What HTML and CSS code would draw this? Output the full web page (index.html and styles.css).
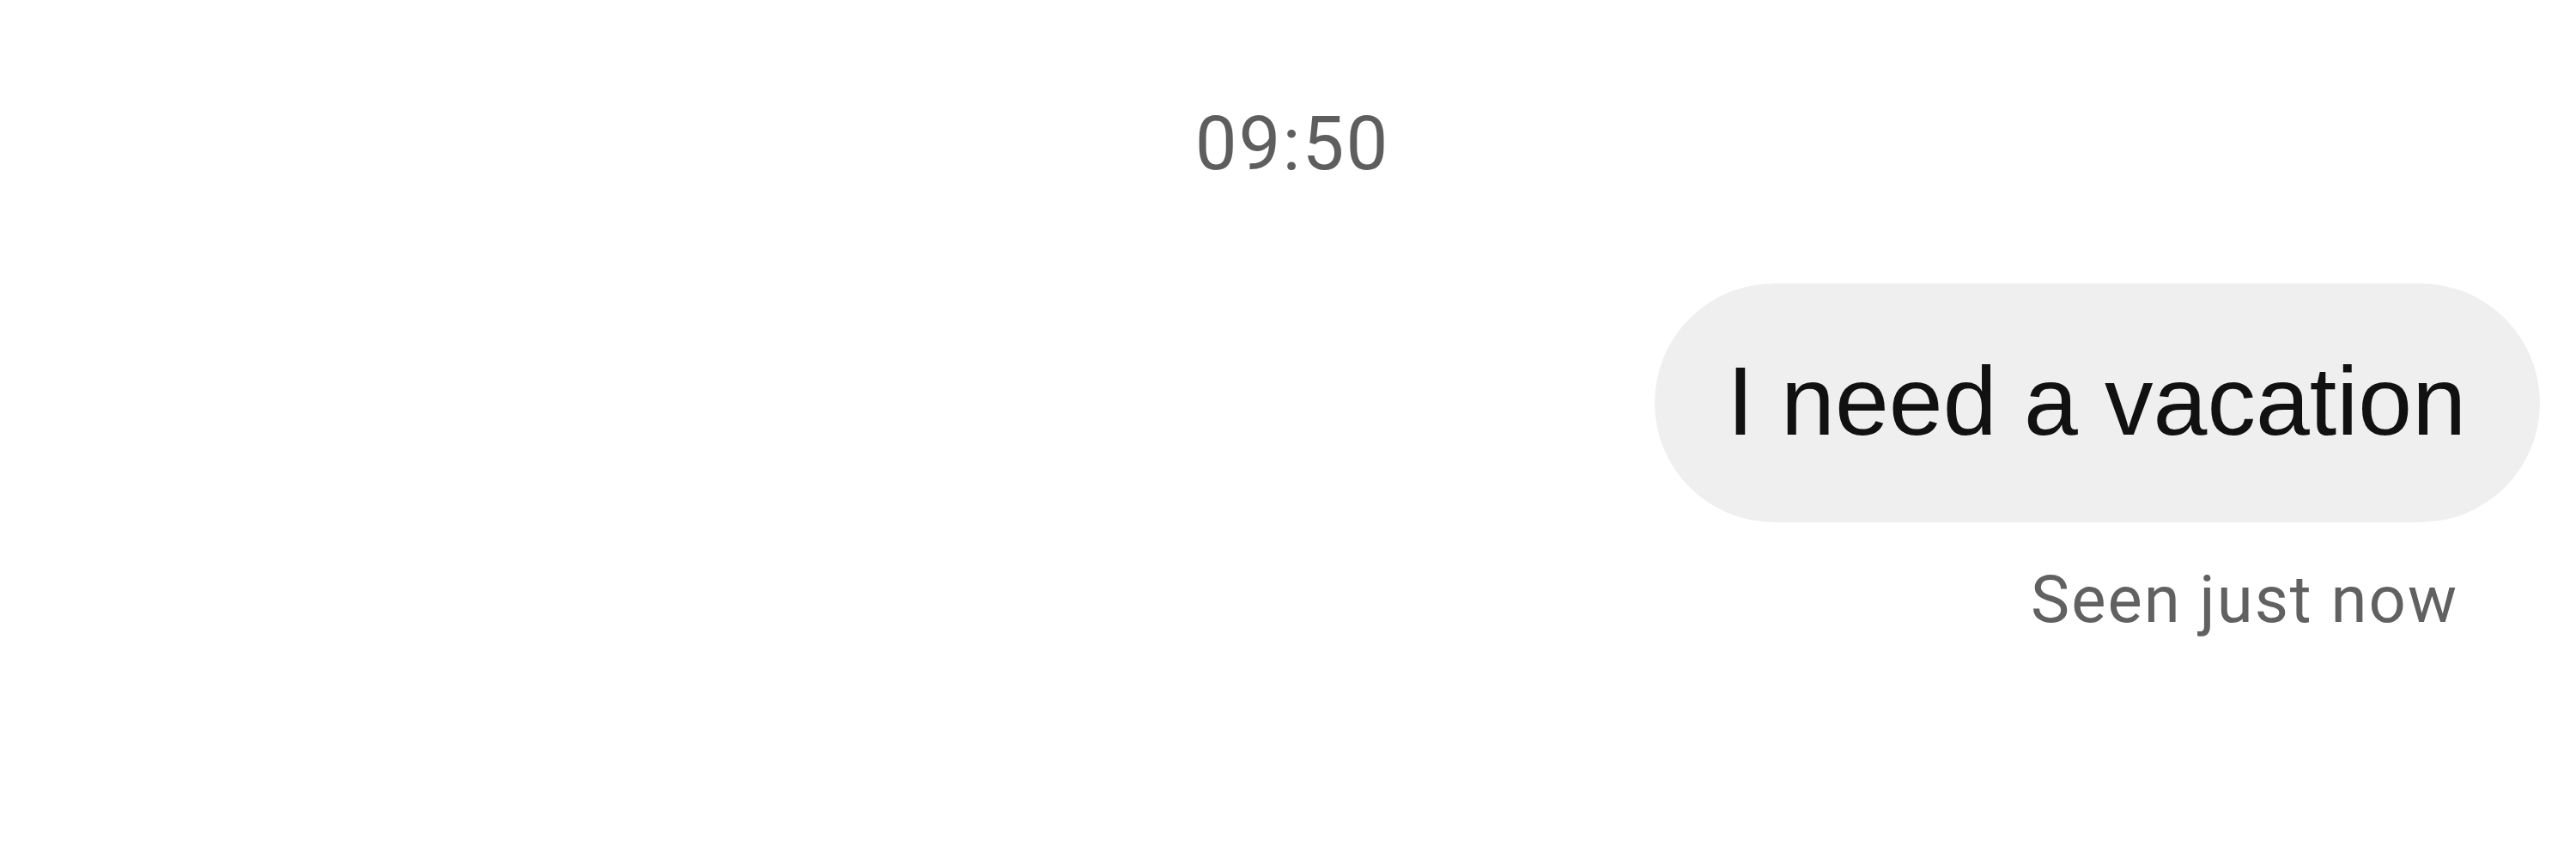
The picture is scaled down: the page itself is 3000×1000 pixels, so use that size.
FILE: index.html
```html
<!DOCTYPE html>
<html lang="en">
    <head>
        <meta charset="UTF-8" />
        <meta name="viewport" content="width=device-width, initial-scale=1.0" />
        <title>Chat</title>
        <link rel="stylesheet" href="styles.css">
    </head>
    <body>
        <div class="chat">
            <div class="time">09:50</div>

            <div class="row">
                <div class="bubble">I need a vacation</div>
            </div>
            <div class="seen">Seen just now</div>
        </div>
    </body>
</html>
```

FILE: styles.css
```css
body {
    margin: 0;
    background: #ffffff;
    font-family: Roboto, "Liberation Sans", Arial, sans-serif;
}

.chat {
    width: 3000px;
    height: 1000px;
    padding: 124px 42px 0 0;
    box-sizing: border-box;
}

.time {
    text-align: center;
    font-size: 87px;
    line-height: 1;
    letter-spacing: 2px;
    color: #5e5e5e;
    padding-left: 52px;
}

.row {
    display: flex;
    justify-content: flex-end;
    margin-top: 119px;
}

.bubble {
    background: #efefef;
    color: #111111;
    font-family: "Liberation Sans", Arial, sans-serif;
    font-size: 113px;
    height: 278px;
    line-height: 274px;
    padding: 0 86px 4px 84px;
    box-sizing: border-box;
    border-radius: 139px;
}

.seen {
    text-align: right;
    margin-top: 52px;
    padding-right: 95px;
    font-size: 76px;
    line-height: 1;
    letter-spacing: 2px;
    color: #616161;
}
```
